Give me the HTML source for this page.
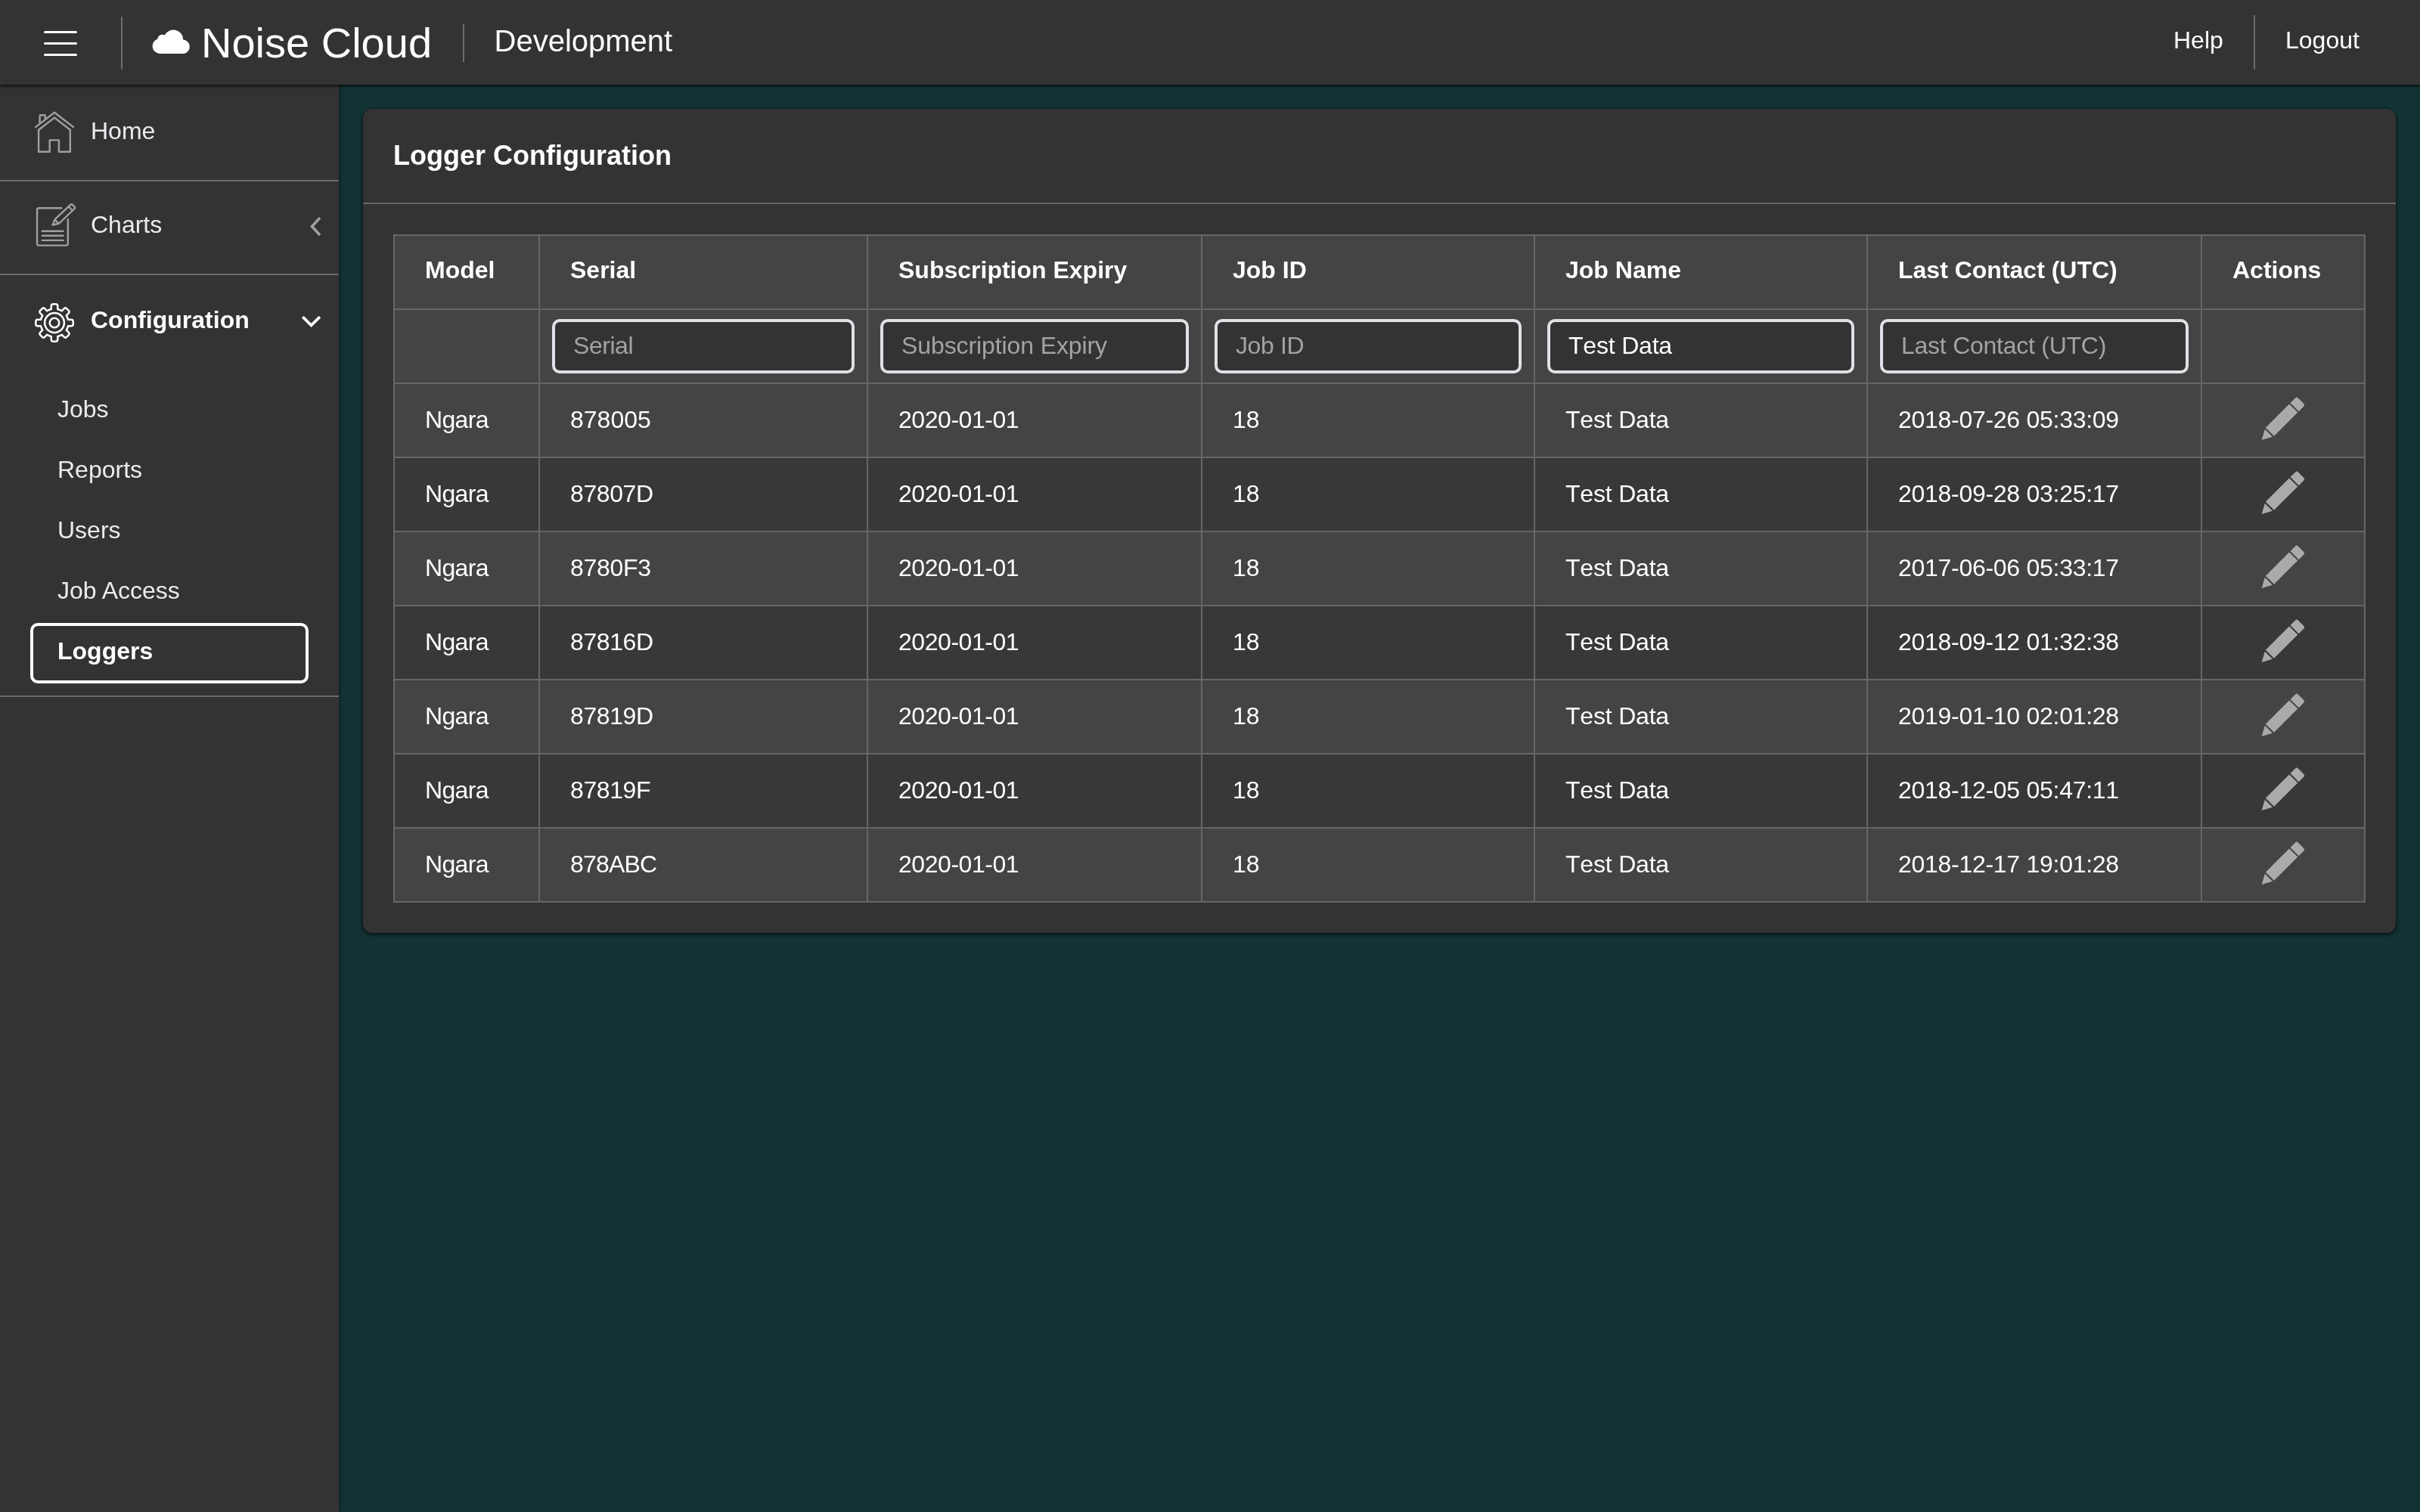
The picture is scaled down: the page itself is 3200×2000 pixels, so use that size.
<!DOCTYPE html>
<html><head><meta charset="utf-8"><title>Noise Cloud</title>
<style>
@media (width:1600px){html{zoom:.5}}
*{box-sizing:border-box}
html,body{margin:0;padding:0}
body{width:3200px;height:2000px;overflow:hidden;background:#123233;font-family:"Liberation Sans",sans-serif;color:#fff;position:relative}
.abs{position:absolute}
#hdr,#side,#panel{will-change:transform}
#hdr{position:absolute;left:0;top:0;width:3200px;height:112px;background:#333;box-shadow:0 2px 4px rgba(0,0,0,.75);z-index:5}
#side{position:absolute;left:0;top:112px;width:448px;height:1888px;background:#333;box-shadow:1px 0 3px rgba(0,0,0,.45);z-index:3}
.t{position:absolute;white-space:nowrap;line-height:1}
.vd{position:absolute;width:2px;background:#6e6e6e}
.hs{position:absolute;left:0;width:448px;height:2px;background:#6b6b6b}
#panel{position:absolute;left:480px;top:144px;width:2688px;height:1090px;background:#333;border-radius:12px;box-shadow:0 2px 5px rgba(0,0,0,.75),0 0 2px rgba(0,0,0,.4)}
#ptitle{position:absolute;left:0;top:0;width:100%;height:126px;border-bottom:2px solid #666}
table{position:absolute;left:40px;top:166px;border-collapse:collapse;table-layout:fixed;width:2606px;font-size:32px}
td,th{border:2px solid #666;height:98px;padding:0 0 0 40px;text-align:left;vertical-align:middle;background:#444;white-space:nowrap;overflow:hidden}
th{font-weight:bold;padding-bottom:6px}
td{padding-bottom:2px;font-kerning:none}
td.m{letter-spacing:-0.65px}td.e{letter-spacing:-0.45px}td.n{letter-spacing:-0.2px}td.l{letter-spacing:-0.28px}
tr.alt td{background:#383838}
td.f{padding:0 16px 0 16px}
.inp{height:72px;width:100%;border:4px solid #dee2e6;border-radius:10px;background:#333;color:#a3a3a3;font-size:32px;line-height:63px;padding-left:24px;white-space:nowrap;overflow:hidden}
.inp.v{color:#fff}
td.a{padding:0;text-align:center;position:relative}
.pc{position:absolute;left:75px;top:14px}
</style></head>
<body>
<div id="hdr">
 <svg class="abs" style="left:56px;top:38px" width="50" height="40" viewBox="0 0 50 40"><g stroke="#fff" stroke-width="3" stroke-linecap="round"><path d="M3.500 4.500H44.500M3.500 19.500H44.500M3.500 34.500H44.500"/></g></svg>
 <div class="vd" style="left:160px;top:22px;height:70px"></div>
 <svg class="abs" style="left:196px;top:32px" width="62" height="46" viewBox="196 32 62 46"><path fill="#fff" d="M211,71 A10,10 0 0 1 208.250,51.600 A6.300,6.300 0 0 1 217.600,46.600 A13,13 0 0 1 242.200,52.400 A9.400,9.400 0 0 1 243.200,71 Z"/></svg>
 <div class="t" id="t_nc" style="left:266px;top:29px;font-size:56px">Noise Cloud</div>
 <div class="vd" style="left:612px;top:32px;height:50px"></div>
 <div class="t" id="t_dev" style="left:653.5px;top:34px;font-size:40px">Development</div>
 <div class="t" id="t_help" style="left:2874px;top:37px;font-size:32px">Help</div>
 <div class="vd" style="left:2980px;top:20px;height:72px"></div>
 <div class="t" id="t_logout" style="left:3022px;top:37px;font-size:32px">Logout</div>
</div>
<div id="side">
 <!-- y coords relative to side: subtract 112 -->
 <svg class="abs" style="left:40px;top:28px" width="64" height="68" viewBox="40 140 64 68"><g fill="none" stroke="#a0a0a0" stroke-width="2.400" stroke-linecap="round" stroke-linejoin="round"><path d="M47,168.100 L72,148.750 L97,168.100"/><path d="M51.100,171.700 L72,155.600 L92.800,171.700 V200.800 H77.900 V185.400 H65.700 V200.800 H51.100 Z"/><path d="M52.600,163 V153.500 Q52.600,152.300 53.800,152.300 H58.600 Q59.800,152.300 59.800,153.500 V157.400"/></g></svg>
 <div class="t" id="t_home" style="left:120px;top:45px;font-size:32px;color:#e9ecef">Home</div>
 <div class="hs" style="top:126px"></div>
 <svg class="abs" style="left:40px;top:148px" width="68" height="72" viewBox="40 260 68 72"><g fill="none" stroke="#a0a0a0" stroke-width="2.400" stroke-linecap="round" stroke-linejoin="round"><path d="M81.200,275.200 H51.450 Q49.050,275.200 49.050,277.600 V322.200 Q49.050,324.600 51.450,324.600 H87.400 Q89.800,324.600 89.800,322.200 V290.100"/><path d="M55.900,305.800H83.600M55.900,311.800H83.600M55.900,317.900H83.600"/><path d="M69.600,297.600 L72.600,290.100 L93.400,270.700 Q94.600,269.600 95.800,270.800 L98.600,273.700 Q99.700,274.900 98.500,276 L78.200,295.500 Z"/><path d="M90.700,273.200 L95.800,278.500M73.500,291.600 L77,295.200"/></g></svg>
 <div class="t" id="t_charts" style="left:120px;top:169px;font-size:32px;color:#e9ecef">Charts</div>
 <svg class="abs" style="left:400px;top:168px" width="34" height="40" viewBox="400 280 34 40"><path fill="none" stroke="#a0a0a0" stroke-width="3.600" d="M423.050,288.100 L412.500,299.560 L423.050,311.020"/></svg>
 <div class="hs" style="top:250px"></div>
 <svg class="abs" style="left:40px;top:282.600px" width="64" height="64" viewBox="-32 -32 64 64"><g fill="none" stroke="#fff" stroke-width="2.500" stroke-linejoin="round"><path d="M-4.26,-18.00 L-4.26,-22.10 Q-4.26,-24.70 -1.66,-24.70 L1.66,-24.70 Q4.26,-24.70 4.26,-22.10 L4.26,-18.00 A18.5,18.5 0 0 1 9.72,-15.74 L12.61,-18.64 Q14.45,-20.48 16.29,-18.64 L18.64,-16.29 Q20.48,-14.45 18.64,-12.61 L15.74,-9.72 A18.5,18.5 0 0 1 18.00,-4.26 L22.10,-4.26 Q24.70,-4.26 24.70,-1.66 L24.70,1.66 Q24.70,4.26 22.10,4.26 L18.00,4.26 A18.5,18.5 0 0 1 15.74,9.72 L18.64,12.61 Q20.48,14.45 18.64,16.29 L16.29,18.64 Q14.45,20.48 12.61,18.64 L9.72,15.74 A18.5,18.5 0 0 1 4.26,18.00 L4.26,22.10 Q4.26,24.70 1.66,24.70 L-1.66,24.70 Q-4.26,24.70 -4.26,22.10 L-4.26,18.00 A18.5,18.5 0 0 1 -9.72,15.74 L-12.61,18.64 Q-14.45,20.48 -16.29,18.64 L-18.64,16.29 Q-20.48,14.45 -18.64,12.61 L-15.74,9.72 A18.5,18.5 0 0 1 -18.00,4.26 L-22.10,4.26 Q-24.70,4.26 -24.70,1.66 L-24.70,-1.66 Q-24.70,-4.26 -22.10,-4.26 L-18.00,-4.26 A18.5,18.5 0 0 1 -15.74,-9.72 L-18.64,-12.61 Q-20.48,-14.45 -18.64,-16.29 L-16.29,-18.64 Q-14.45,-20.48 -12.61,-18.64 L-9.72,-15.74 A18.5,18.5 0 0 1 -4.26,-18.00 Z"/><circle r="12.900"/><circle r="6.300"/></g></svg>
 <div class="t" id="t_conf" style="left:120px;top:295px;font-size:32px;font-weight:bold">Configuration</div>
 <svg class="abs" style="left:392px;top:300px" width="40" height="30" viewBox="392 412 40 30"><path fill="none" stroke="#fff" stroke-width="3.700" d="M400.300,419.150 L411.550,430.300 L422.900,419.150"/></svg>
 <div class="t" id="t_jobs" style="left:76px;top:413px;font-size:32px;color:#e9ecef">Jobs</div>
 <div class="t" id="t_reports" style="left:76px;top:493px;font-size:32px;color:#e9ecef">Reports</div>
 <div class="t" id="t_users" style="left:76px;top:573px;font-size:32px;color:#e9ecef">Users</div>
 <div class="t" id="t_jobaccess" style="left:76px;top:653px;font-size:32px;color:#e9ecef">Job Access</div>
 <div class="abs" style="left:40px;top:712px;width:368px;height:80px;border:4px solid #fff;border-radius:10px"></div>
 <div class="t" id="t_loggers" style="left:76px;top:733px;font-size:32px;font-weight:bold">Loggers</div>
 <div class="hs" style="top:808px"></div>
</div>
<div id="panel">
 <div id="ptitle"></div>
 <div class="t" id="t_title" style="left:40px;top:44px;font-size:36px;font-weight:bold">Logger Configuration</div>
 <table id="tbl">
 <colgroup><col style="width:192px"><col style="width:434px"><col style="width:442px"><col style="width:440px"><col style="width:440px"><col style="width:442px"><col style="width:216px"></colgroup>
 <tr><th>Model</th><th>Serial</th><th>Subscription Expiry</th><th>Job ID</th><th>Job Name</th><th>Last Contact (UTC)</th><th>Actions</th></tr>
 <tr><td></td><td class="f"><div class="inp" style="letter-spacing:-0.45px">Serial</div></td><td class="f"><div class="inp" style="letter-spacing:-0.1px">Subscription Expiry</div></td><td class="f"><div class="inp" style="letter-spacing:-0.4px">Job ID</div></td><td class="f"><div class="inp v" style="letter-spacing:-0.2px">Test Data</div></td><td class="f"><div class="inp" style="letter-spacing:-0.25px">Last Contact (UTC)</div></td><td></td></tr>
 <tr><td class="m">Ngara</td><td class="s">878005</td><td class="e">2020-01-01</td><td class="j">18</td><td class="n">Test Data</td><td class="l">2018-07-26 05:33:09</td><td class="a"><svg class="pc" width="64" height="64" viewBox="0 0 64 64"><g fill="#aaa" transform="translate(3.700,60) scale(0.975) rotate(-45)"><path d="M0,0 L13.300,-7.300 V7.300 Z"/><rect x="15.600" y="-8.100" width="45.300" height="16.200"/><path d="M63,-8.100 H72.200 Q75.200,-8.100 75.200,-5.100 V5.100 Q75.200,8.100 72.200,8.100 H63 Z"/></g></svg></td></tr>
 <tr class="alt"><td class="m">Ngara</td><td class="s" style="letter-spacing:-0.4px">87807D</td><td class="e">2020-01-01</td><td class="j">18</td><td class="n">Test Data</td><td class="l">2018-09-28 03:25:17</td><td class="a"><svg class="pc" width="64" height="64" viewBox="0 0 64 64"><g fill="#aaa" transform="translate(3.700,60) scale(0.975) rotate(-45)"><path d="M0,0 L13.300,-7.300 V7.300 Z"/><rect x="15.600" y="-8.100" width="45.300" height="16.200"/><path d="M63,-8.100 H72.200 Q75.200,-8.100 75.200,-5.100 V5.100 Q75.200,8.100 72.200,8.100 H63 Z"/></g></svg></td></tr>
 <tr><td class="m">Ngara</td><td class="s" style="letter-spacing:-0.3px">8780F3</td><td class="e">2020-01-01</td><td class="j">18</td><td class="n">Test Data</td><td class="l">2017-06-06 05:33:17</td><td class="a"><svg class="pc" width="64" height="64" viewBox="0 0 64 64"><g fill="#aaa" transform="translate(3.700,60) scale(0.975) rotate(-45)"><path d="M0,0 L13.300,-7.300 V7.300 Z"/><rect x="15.600" y="-8.100" width="45.300" height="16.200"/><path d="M63,-8.100 H72.200 Q75.200,-8.100 75.200,-5.100 V5.100 Q75.200,8.100 72.200,8.100 H63 Z"/></g></svg></td></tr>
 <tr class="alt"><td class="m">Ngara</td><td class="s" style="letter-spacing:-0.4px">87816D</td><td class="e">2020-01-01</td><td class="j">18</td><td class="n">Test Data</td><td class="l">2018-09-12 01:32:38</td><td class="a"><svg class="pc" width="64" height="64" viewBox="0 0 64 64"><g fill="#aaa" transform="translate(3.700,60) scale(0.975) rotate(-45)"><path d="M0,0 L13.300,-7.300 V7.300 Z"/><rect x="15.600" y="-8.100" width="45.300" height="16.200"/><path d="M63,-8.100 H72.200 Q75.200,-8.100 75.200,-5.100 V5.100 Q75.200,8.100 72.200,8.100 H63 Z"/></g></svg></td></tr>
 <tr><td class="m">Ngara</td><td class="s" style="letter-spacing:-0.4px">87819D</td><td class="e">2020-01-01</td><td class="j">18</td><td class="n">Test Data</td><td class="l">2019-01-10 02:01:28</td><td class="a"><svg class="pc" width="64" height="64" viewBox="0 0 64 64"><g fill="#aaa" transform="translate(3.700,60) scale(0.975) rotate(-45)"><path d="M0,0 L13.300,-7.300 V7.300 Z"/><rect x="15.600" y="-8.100" width="45.300" height="16.200"/><path d="M63,-8.100 H72.200 Q75.200,-8.100 75.200,-5.100 V5.100 Q75.200,8.100 72.200,8.100 H63 Z"/></g></svg></td></tr>
 <tr class="alt"><td class="m">Ngara</td><td class="s" style="letter-spacing:-0.4px">87819F</td><td class="e">2020-01-01</td><td class="j">18</td><td class="n">Test Data</td><td class="l">2018-12-05 05:47:11</td><td class="a"><svg class="pc" width="64" height="64" viewBox="0 0 64 64"><g fill="#aaa" transform="translate(3.700,60) scale(0.975) rotate(-45)"><path d="M0,0 L13.300,-7.300 V7.300 Z"/><rect x="15.600" y="-8.100" width="45.300" height="16.200"/><path d="M63,-8.100 H72.200 Q75.200,-8.100 75.200,-5.100 V5.100 Q75.200,8.100 72.200,8.100 H63 Z"/></g></svg></td></tr>
 <tr><td class="m">Ngara</td><td class="s" style="letter-spacing:-0.8px">878ABC</td><td class="e">2020-01-01</td><td class="j">18</td><td class="n">Test Data</td><td class="l">2018-12-17 19:01:28</td><td class="a"><svg class="pc" width="64" height="64" viewBox="0 0 64 64"><g fill="#aaa" transform="translate(3.700,60) scale(0.975) rotate(-45)"><path d="M0,0 L13.300,-7.300 V7.300 Z"/><rect x="15.600" y="-8.100" width="45.300" height="16.200"/><path d="M63,-8.100 H72.200 Q75.200,-8.100 75.200,-5.100 V5.100 Q75.200,8.100 72.200,8.100 H63 Z"/></g></svg></td></tr>
 </table>
</div>
</body></html>
